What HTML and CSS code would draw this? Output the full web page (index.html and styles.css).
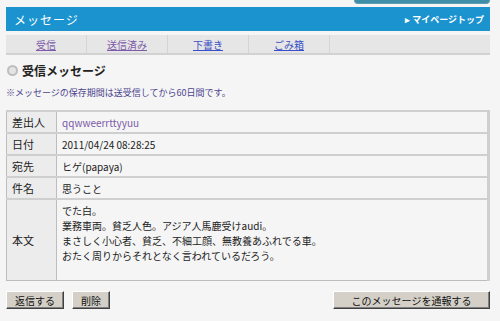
FILE: index.html
```html
<!doctype html>
<html>
<head>
<meta charset="utf-8">
<link rel="stylesheet" href="styles.css">
<title>メッセージ</title>
</head>
<body>
<div id="page">
	<div class="topstrip"><div class="tealtab"></div></div>
	<div class="header">
		<span class="title">メッセージ</span>
		<a class="mytop" href="#">&#9656; マイページトップ</a>
	</div>
	<div class="tabs">
		<a class="tab visited" href="#">受信</a>
		<a class="tab visited" href="#">送信済み</a>
		<a class="tab" href="#">下書き</a>
		<a class="tab" href="#">ごみ箱</a>
		<span class="tab-rest"></span>
	</div>
	<h2 class="section"><span class="dot"></span>受信メッセージ</h2>
	<div class="note">※メッセージの保存期間は送受信してから60日間です。</div>
	<table class="msg" cellspacing="0">
		<tr><th>差出人</th><td><a class="from" href="#">qqwweerrttyyuu</a></td></tr>
		<tr><th>日付</th><td>2011/04/24 08:28:25</td></tr>
		<tr><th>宛先</th><td>ヒゲ(papaya)</td></tr>
		<tr><th>件名</th><td>思うこと</td></tr>
		<tr class="body-row"><th>本文</th><td>でた白。<br>業務車両。貧乏人色。アジア人馬鹿受けaudi。<br>まさしく小心者、貧乏、不細工顔、無教養あふれでる車。<br>おたく周りからそれとなく言われているだろう。</td></tr>
	</table>
	<div class="actions">
		<button class="btn">返信する</button>
		<button class="btn">削除</button>
		<button class="btn report">このメッセージを通報する</button>
	</div>
</div>
</body>
</html>
```
FILE: styles.css
```css
body {
	margin: 0;
	background-color: #f5f5f5;
	font-family: "Noto Sans CJK JP", "Liberation Sans", sans-serif;
	font-size: 11px;
	color: #222;
}
#page {
	width: 484px;
	margin-left: 6px;
}
.topstrip {
	display: flex;
	justify-content: flex-end;
	height: 7px;
}
.tealtab {
	width: 134px;
	height: 3px;
	background-color: #3d8ea6;
	border: 1px solid #5a9fb3;
	border-top: none;
	border-radius: 0 0 4px 4px;
}
.header {
	height: 24px;
	background-color: #1b93cf;
	display: flex;
	align-items: center;
	justify-content: space-between;
	padding: 0 6px 0 8px;
	color: white;
}
.title {
	font-size: 12px;
	letter-spacing: 1px;
}
.mytop {
	color: white;
	font-size: 9px;
	font-weight: bold;
	text-decoration: none;
}
.tabs {
	margin-top: 4px;
	height: 18px;
	background-color: #e6e6e6;
	border-bottom: 2px solid #d2d2d2;
	display: flex;
}
.tab {
	width: 80px;
	border-right: 1px solid #d4d4d4;
	text-align: center;
	line-height: 19px;
	font-size: 10px;
	color: #3a4fc7;
}
.tab.visited {
	color: #7d5aa8;
}
.section {
	margin: 8px 0 0 1px;
	font-size: 12px;
	font-weight: bold;
	display: flex;
	align-items: center;
	height: 14px;
}
.dot {
	width: 7px;
	height: 7px;
	border-radius: 50%;
	background-color: #e4e4e4;
	border: 2px solid #bdbdbd;
	margin-right: 4px;
}
.note {
	margin-top: 9px;
	font-size: 9px;
	color: #4c4590;
}
.msg {
	margin-top: 11px;
	width: 484px;
	border-collapse: collapse;
	border-top: 2px solid #cfcfcf;
	border-right: 3px solid #cfcfcf;
}
.msg th, .msg td {
	border: 1px solid #bdbdbd;
	border-top: 2px solid #cfcfcf;
	height: 20px;
	padding: 0 5px;
	text-align: left;
	font-size: 10px;
}
.msg th {
	width: 39px;
	background-color: #ececec;
	font-weight: normal;
	font-size: 11px;
}
.msg td {
	background-color: #f5f5f5;
}
.from {
	color: #7d5aa8;
	text-decoration: none;
}
.body-row th, .body-row td {
	height: 77px;
}
.body-row td {
	vertical-align: top;
	padding-top: 3px;
	line-height: 15px;
}
.actions {
	margin-top: 10px;
	display: flex;
	align-items: flex-start;
}
.btn {
	font-family: "Noto Sans CJK JP", sans-serif;
	font-size: 10px;
	background-color: #d4d0c8;
	border: 1px solid;
	border-color: #ffffff #404040 #404040 #ffffff;
	box-shadow: inset -1px -1px 0 #808080;
	height: 18px;
	padding: 0 8px;
	margin-right: 8px;
	color: #111;
}
.btn.report {
	margin-left: auto;
	margin-right: 0;
	width: 157px;
}
```
